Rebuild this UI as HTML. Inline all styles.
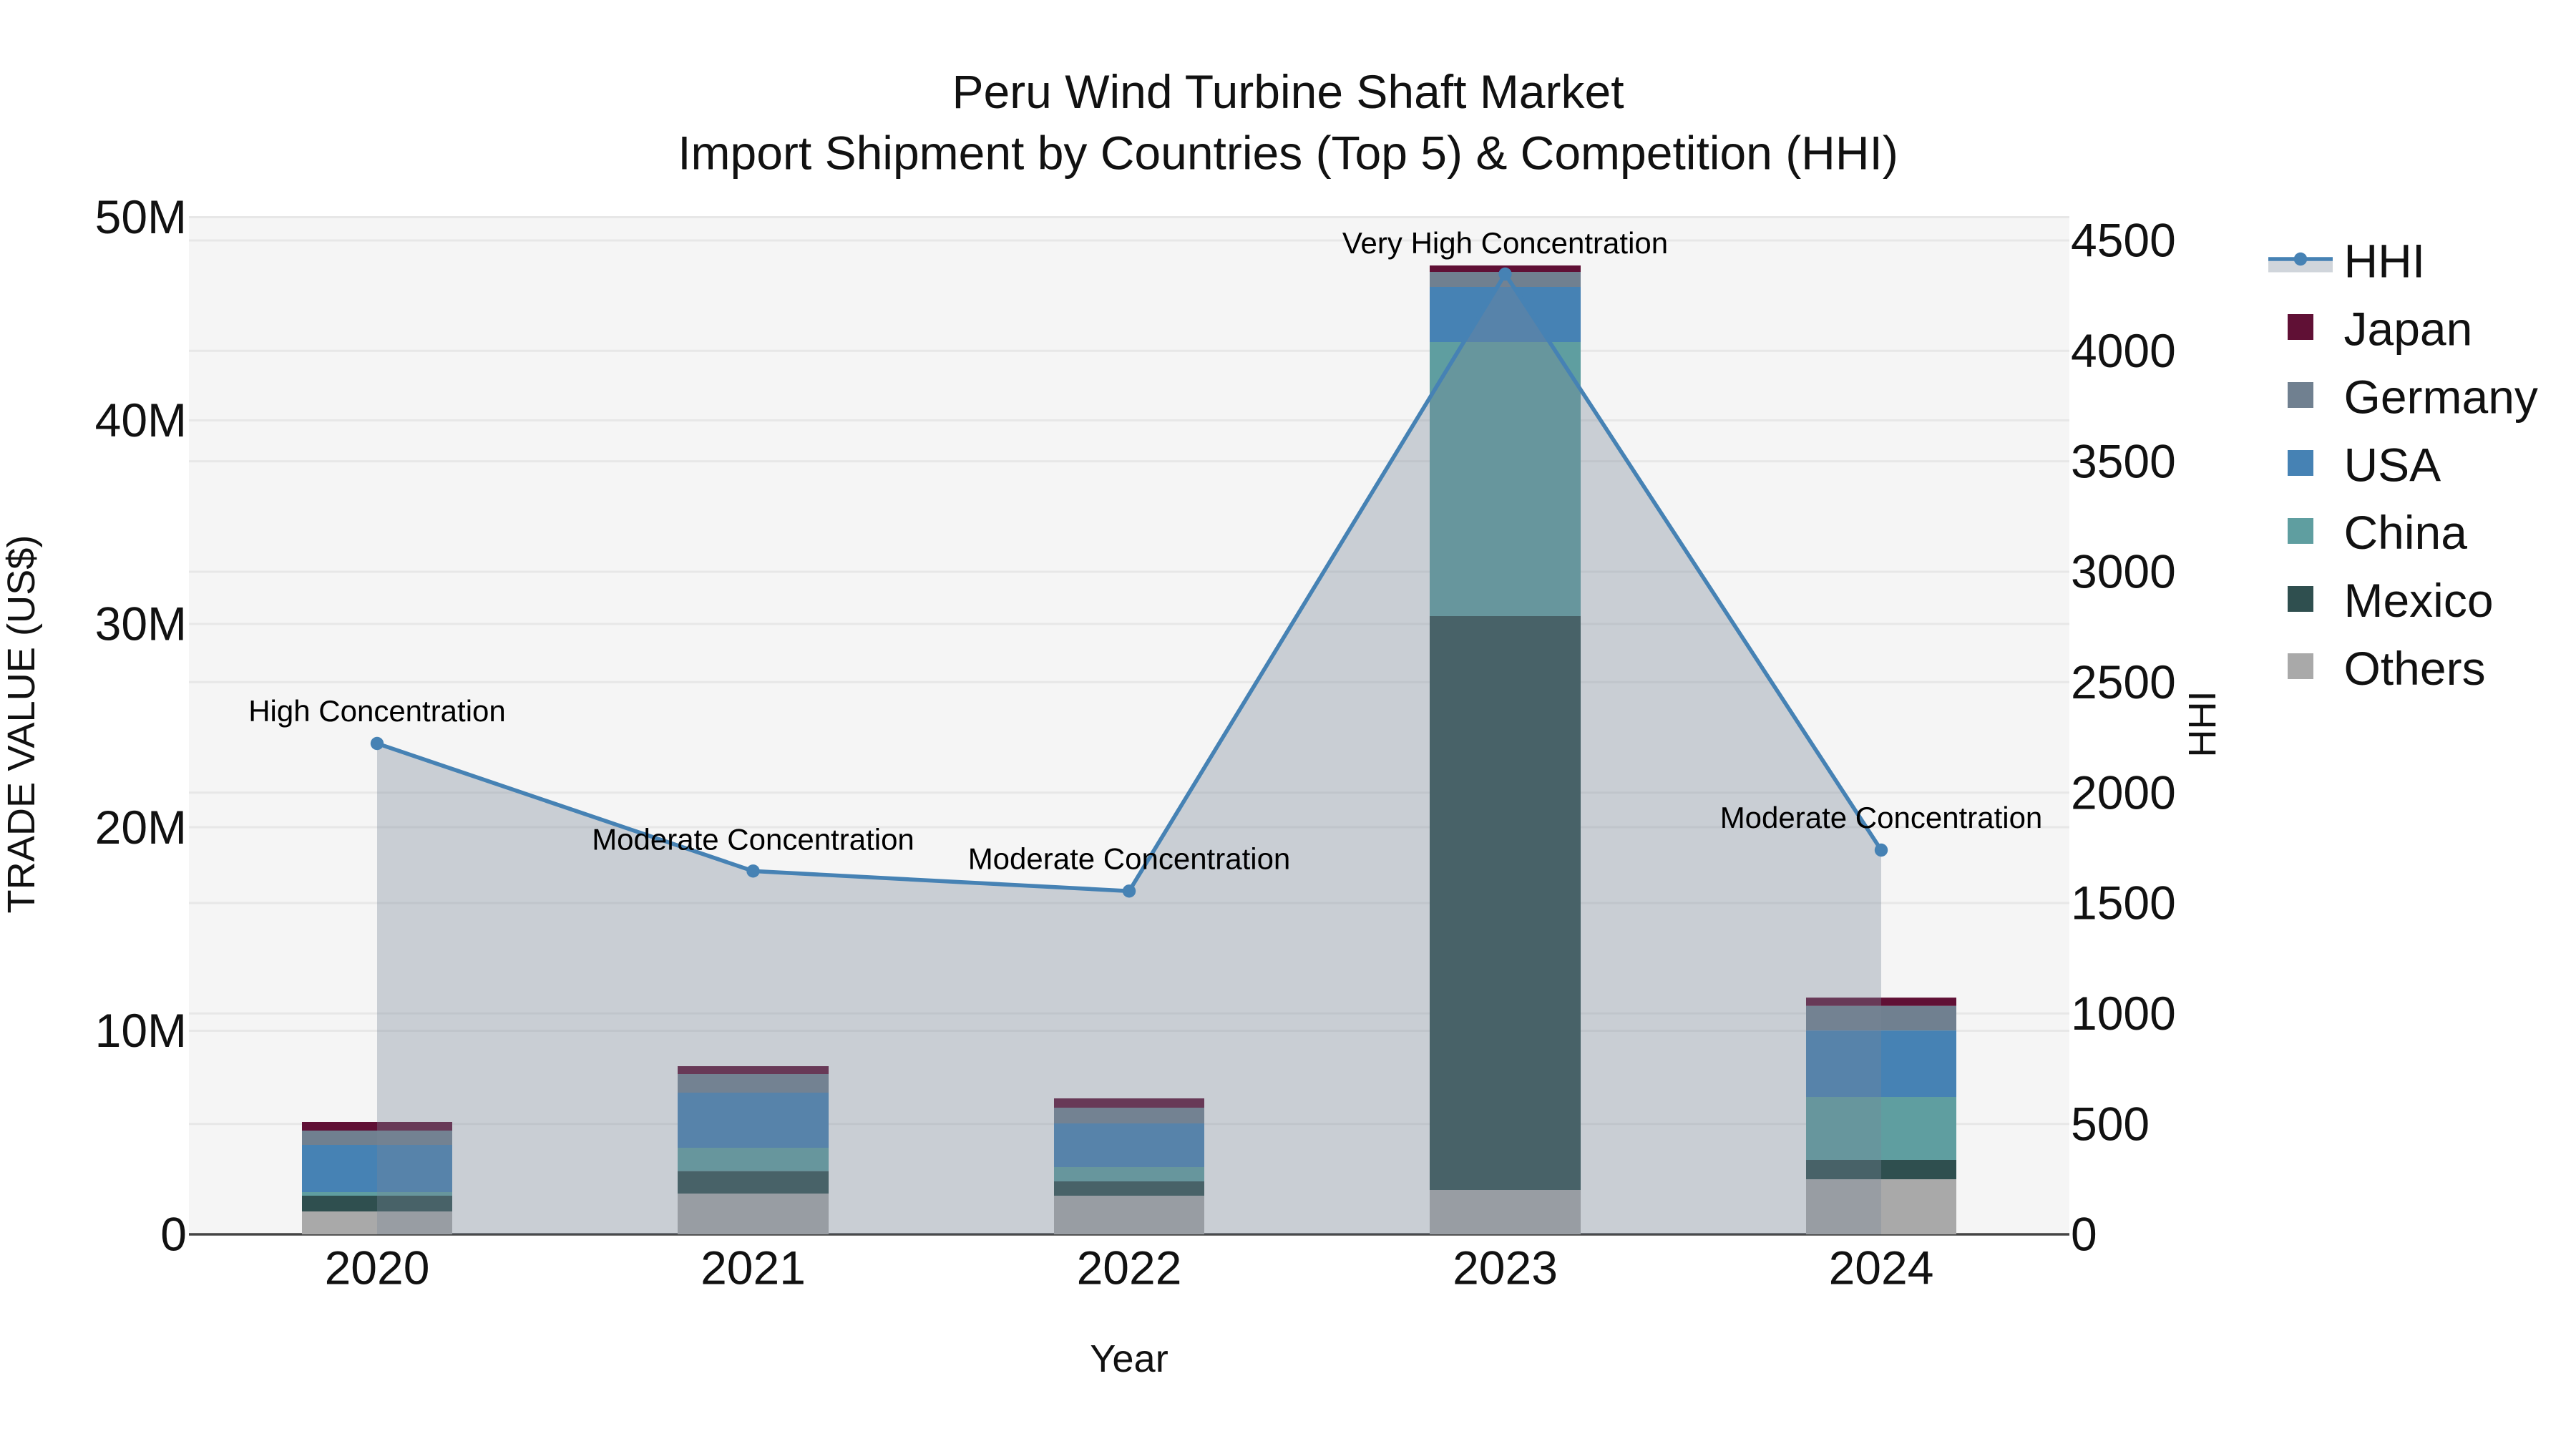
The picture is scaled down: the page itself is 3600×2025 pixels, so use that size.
<!DOCTYPE html>
<html>
<head>
<meta charset="utf-8">
<title>Peru Wind Turbine Shaft Market</title>
<style>
html,body{margin:0;padding:0;background:#fff;width:3600px;height:2025px;overflow:hidden}
svg{display:block}
text{font-family:"Liberation Sans",Arial,sans-serif}
.t{font-size:66px;fill:#111}
.a{font-size:54.2px;fill:#111}
.n{font-size:42px;fill:#000;text-anchor:middle}
.l{font-size:66px;fill:#111}
</style>
</head>
<body>
<svg width="3600" height="2025" viewBox="0 0 3600 2025" xmlns="http://www.w3.org/2000/svg">
<rect width="3600" height="2025" fill="#fff"/>
<rect x="264" y="303" width="2628" height="1422" fill="#f5f5f5"/>
<g stroke="#e7e7e7" stroke-width="3">
<path d="M264 303.5H2892M264 587.5H2892M264 872H2892M264 1156H2892M264 1440.5H2892"/>
<path d="M264 336H2892M264 490.3H2892M264 644.6H2892M264 799H2892M264 953.3H2892M264 1107.7H2892M264 1262H2892M264 1416.3H2892M264 1570.7H2892"/>
</g>
<path d="M264 1725H2892" stroke="#444" stroke-width="3.4"/>

<g>
<rect x="422" y="1568" width="210" height="12" fill="#601035"/>
<rect x="422" y="1580" width="210" height="20" fill="#708090"/>
<rect x="422" y="1600" width="210" height="66" fill="#4682b4"/>
<rect x="422" y="1666" width="210" height="5" fill="#5f9ea0"/>
<rect x="422" y="1671" width="210" height="22" fill="#2f4f4f"/>
<rect x="422" y="1693" width="210" height="32" fill="#a9a9a9"/>

<rect x="947" y="1490" width="211" height="11" fill="#601035"/>
<rect x="947" y="1501" width="211" height="26" fill="#708090"/>
<rect x="947" y="1527" width="211" height="77" fill="#4682b4"/>
<rect x="947" y="1604" width="211" height="32.7" fill="#5f9ea0"/>
<rect x="947" y="1636.7" width="211" height="31.3" fill="#2f4f4f"/>
<rect x="947" y="1668" width="211" height="57" fill="#a9a9a9"/>

<rect x="1473" y="1535" width="210" height="13" fill="#601035"/>
<rect x="1473" y="1548" width="210" height="22" fill="#708090"/>
<rect x="1473" y="1570" width="210" height="61" fill="#4682b4"/>
<rect x="1473" y="1631" width="210" height="20" fill="#5f9ea0"/>
<rect x="1473" y="1651" width="210" height="20" fill="#2f4f4f"/>
<rect x="1473" y="1671" width="210" height="54" fill="#a9a9a9"/>

<rect x="1998" y="371" width="211" height="9" fill="#601035"/>
<rect x="1998" y="380" width="211" height="21" fill="#708090"/>
<rect x="1998" y="401" width="211" height="77" fill="#4682b4"/>
<rect x="1998" y="478" width="211" height="383" fill="#5f9ea0"/>
<rect x="1998" y="861" width="211" height="802" fill="#2f4f4f"/>
<rect x="1998" y="1663" width="211" height="62" fill="#a9a9a9"/>

<rect x="2524" y="1394.2" width="210" height="11.6" fill="#601035"/>
<rect x="2524" y="1405.8" width="210" height="34.4" fill="#708090"/>
<rect x="2524" y="1440.2" width="210" height="92.8" fill="#4682b4"/>
<rect x="2524" y="1533" width="210" height="88" fill="#5f9ea0"/>
<rect x="2524" y="1621" width="210" height="27.2" fill="#2f4f4f"/>
<rect x="2524" y="1648.2" width="210" height="76.8" fill="#a9a9a9"/>
</g>

<polygon points="527,1725 527,1039 1052.5,1217.3 1578,1245.3 2103.5,383 2629,1188 2629,1725" fill="#778899" fill-opacity="0.35"/>
<polyline points="527,1039 1052.5,1217.3 1578,1245.3 2103.5,383 2629,1188" fill="none" stroke="#4682b4" stroke-width="5.6" stroke-linejoin="round"/>
<g fill="#4682b4">
<circle cx="527" cy="1039" r="9.2"/>
<circle cx="1052.5" cy="1217.3" r="9.2"/>
<circle cx="1578" cy="1245.3" r="9.2"/>
<circle cx="2103.5" cy="383" r="9.2"/>
<circle cx="2629" cy="1188" r="9.2"/>
</g>

<text class="n" x="527" y="1008">High Concentration</text>
<text class="n" x="1052.5" y="1187.5">Moderate Concentration</text>
<text class="n" x="1578" y="1214.5">Moderate Concentration</text>
<text class="n" x="2103.5" y="354">Very High Concentration</text>
<text class="n" x="2629" y="1157">Moderate Concentration</text>

<text class="t" x="1800" y="150.8" text-anchor="middle">Peru Wind Turbine Shaft Market</text>
<text class="t" x="1800" y="236.6" text-anchor="middle">Import Shipment by Countries (Top 5) &amp; Competition (HHI)</text>

<text class="t" x="261" y="326" text-anchor="end">50M</text>
<text class="t" x="261" y="610" text-anchor="end">40M</text>
<text class="t" x="261" y="894.5" text-anchor="end">30M</text>
<text class="t" x="261" y="1179" text-anchor="end">20M</text>
<text class="t" x="261" y="1463" text-anchor="end">10M</text>
<text class="t" x="261" y="1747.5" text-anchor="end">0</text>

<text class="t" x="2894" y="358.5">4500</text>
<text class="t" x="2894" y="513">4000</text>
<text class="t" x="2894" y="667.3">3500</text>
<text class="t" x="2894" y="821.6">3000</text>
<text class="t" x="2894" y="976">2500</text>
<text class="t" x="2894" y="1130.3">2000</text>
<text class="t" x="2894" y="1284.6">1500</text>
<text class="t" x="2894" y="1439">1000</text>
<text class="t" x="2894" y="1593.3">500</text>
<text class="t" x="2894" y="1747.5">0</text>

<text class="t" x="527" y="1794.5" text-anchor="middle">2020</text>
<text class="t" x="1052.5" y="1794.5" text-anchor="middle">2021</text>
<text class="t" x="1578" y="1794.5" text-anchor="middle">2022</text>
<text class="t" x="2103.5" y="1794.5" text-anchor="middle">2023</text>
<text class="t" x="2629" y="1794.5" text-anchor="middle">2024</text>

<text class="a" x="1578" y="1917" text-anchor="middle">Year</text>
<text class="a" transform="translate(48,1012) rotate(-90)" text-anchor="middle">TRADE VALUE (US$)</text>
<text class="a" transform="translate(3096,1012) rotate(-90)" text-anchor="middle">HHI</text>

<rect x="3170" y="362" width="90" height="18.5" fill="#778899" fill-opacity="0.35"/>
<path d="M3170 362H3260" stroke="#4682b4" stroke-width="5.6"/>
<circle cx="3215" cy="362" r="9.2" fill="#4682b4"/>
<rect x="3197" y="439" width="36" height="36" fill="#601035"/>
<rect x="3197" y="534" width="36" height="36" fill="#708090"/>
<rect x="3197" y="629" width="36" height="36" fill="#4682b4"/>
<rect x="3197" y="724" width="36" height="36" fill="#5f9ea0"/>
<rect x="3197" y="819" width="36" height="36" fill="#2f4f4f"/>
<rect x="3197" y="913" width="36" height="36" fill="#a9a9a9"/>

<text class="l" x="3275.5" y="387.5">HHI</text>
<text class="l" x="3275.5" y="482.5">Japan</text>
<text class="l" x="3275.5" y="577.5">Germany</text>
<text class="l" x="3275.5" y="672.5">USA</text>
<text class="l" x="3275.5" y="767">China</text>
<text class="l" x="3275.5" y="862">Mexico</text>
<text class="l" x="3275.5" y="957">Others</text>
</svg>
</body>
</html>
